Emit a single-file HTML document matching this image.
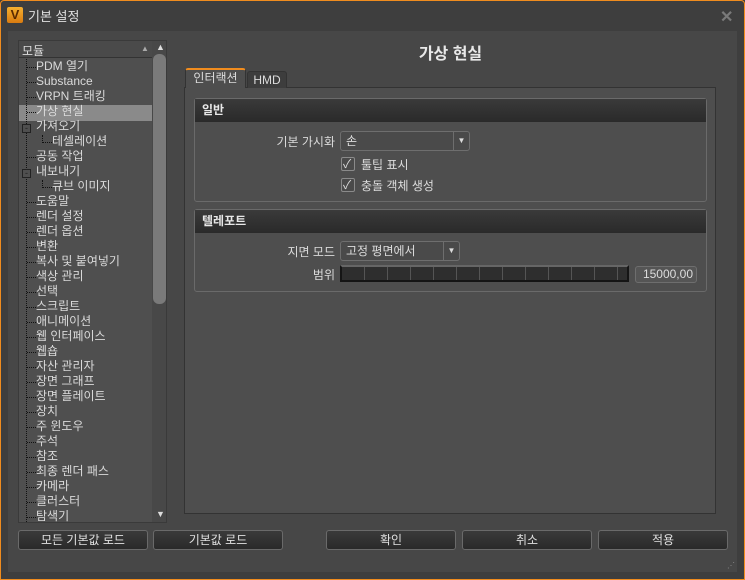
<!DOCTYPE html>
<html><head><meta charset="utf-8"><style>
*{margin:0;padding:0;box-sizing:border-box}
body{width:745px;height:580px;background:#3e3e3e;font-family:"Liberation Sans","Noto Sans CJK KR","NanumGothic",sans-serif;font-size:12px;color:#dcdcdc;position:relative;overflow:hidden}
.a{position:absolute}
#win{left:0;top:0;width:745px;height:580px;border:1px solid #f08c1e;border-radius:4px 4px 0 0}
#body{left:8px;top:31px;width:729px;height:541px;background:#474747}
#tree{left:18px;top:40px;width:149px;height:483px;background:#4f4f4f;border:1px solid #3a3a3a;overflow:hidden}
.it{position:absolute;left:18px;height:15px;line-height:15px;font-size:12px;white-space:nowrap;color:#dadada}
.d{position:absolute;border-top:1px dotted #111;width:9px;left:8px}
.btn{position:absolute;top:530px;height:20px;border:1px solid #6a6a6a;border-radius:3px;background:linear-gradient(#3a3a3a,#2a2a2a);color:#e0e0e0;text-align:center;line-height:18px;font-size:12px}
.grp{position:absolute;left:194px;width:513px;border:1px solid #6a6a6a;border-radius:3px}
.gh{height:23px;background:linear-gradient(#3a3a3a,#2a2a2a);font-weight:bold;padding-left:7px;line-height:22px;color:#e8e8e8}
.lbl{position:absolute;text-align:right;color:#dadada}
.cb{position:absolute;width:14px;height:14px;border:1px solid #8a8a8a;border-radius:2px;background:#4a4a4a}
</style></head><body>
<div class="a" id="win"></div>
<div class="a" style="left:7px;top:7px;width:16px;height:16px;background:linear-gradient(#f5b030,#d97b10);border-radius:2px;color:#5a2a00;font-weight:bold;font-size:13px;line-height:15px;text-align:center">V</div>
<div class="a" style="left:28px;top:6px;font-size:13px;color:#e0e0e0">기본 설정</div>
<div class="a" style="left:720px;top:7px;font-size:16px;color:#7a7a7a;font-weight:bold">✕</div>
<div class="a" id="body"></div>
<div class="a" id="tree">
 <div class="a" style="left:0;top:0;width:133px;height:17px;border-bottom:1px solid #333;background:#4a4a4a"></div>
 <div class="a" style="left:3px;top:1px;font-size:12px">모듈</div>
 <div class="a" style="left:122px;top:3px;font-size:8px;color:#aaa">▲</div>
 <div class="a" style="left:133px;top:0;width:14px;height:481px;background:#484848"></div>
 <div class="a" style="left:137px;top:1px;font-size:9px;color:#ddd">▲</div>
 <div class="a" style="left:134px;top:13px;width:13px;height:250px;background:#7a7a7a;border-radius:6px"></div>
 <div class="a" style="left:137px;top:468px;font-size:9px;color:#ddd">▼</div>
 <div class="a" style="left:0;top:64px;width:133px;height:16px;background:#8a8a8a"></div>
 <div class="a" style="left:7px;top:18px;height:465px;border-left:1px dotted #111"></div>
 <div class="a" style="left:23px;top:94px;height:8px;border-left:1px dotted #111"></div>
 <div class="a" style="left:23px;top:139px;height:8px;border-left:1px dotted #111"></div>
 <div class="d" style="top:26px"></div><div class="d" style="top:41px"></div><div class="d" style="top:56px"></div><div class="d" style="top:71px"></div>
 <div class="d" style="top:101px;left:24px;width:9px"></div><div class="d" style="top:116px"></div>
 <div class="d" style="top:146px;left:24px;width:9px"></div>
 <div class="d" style="top:161px"></div><div class="d" style="top:176px"></div><div class="d" style="top:191px"></div><div class="d" style="top:206px"></div><div class="d" style="top:221px"></div><div class="d" style="top:236px"></div><div class="d" style="top:251px"></div><div class="d" style="top:266px"></div><div class="d" style="top:281px"></div><div class="d" style="top:296px"></div><div class="d" style="top:311px"></div><div class="d" style="top:326px"></div><div class="d" style="top:341px"></div><div class="d" style="top:356px"></div><div class="d" style="top:371px"></div><div class="d" style="top:386px"></div><div class="d" style="top:401px"></div><div class="d" style="top:416px"></div><div class="d" style="top:431px"></div><div class="d" style="top:446px"></div><div class="d" style="top:461px"></div><div class="d" style="top:476px"></div>
 <div class="a" style="left:3px;top:83px;width:9px;height:9px;border:1px solid #222;background:#4f4f4f;font-size:9px;line-height:6px;text-align:center;color:#222">-</div>
 <div class="a" style="left:3px;top:128px;width:9px;height:9px;border:1px solid #222;background:#4f4f4f;font-size:9px;line-height:6px;text-align:center;color:#222">-</div>
</div>
<div class="a" style="left:18px;top:40px;width:133px;height:483px">
 <div class="it" style="top:19px">PDM 열기</div>
 <div class="it" style="top:34px">Substance</div>
 <div class="it" style="top:49px">VRPN 트래킹</div>
 <div class="it" style="top:64px">가상 현실</div>
 <div class="it" style="top:79px">가져오기</div>
 <div class="it" style="top:94px;left:34px">테셀레이션</div>
 <div class="it" style="top:109px">공동 작업</div>
 <div class="it" style="top:124px">내보내기</div>
 <div class="it" style="top:139px;left:34px">큐브 이미지</div>
 <div class="it" style="top:154px">도움말</div>
 <div class="it" style="top:169px">렌더 설정</div>
 <div class="it" style="top:184px">렌더 옵션</div>
 <div class="it" style="top:199px">변환</div>
 <div class="it" style="top:214px">복사 및 붙여넣기</div>
 <div class="it" style="top:229px">색상 관리</div>
 <div class="it" style="top:244px">선택</div>
 <div class="it" style="top:259px">스크립트</div>
 <div class="it" style="top:274px">애니메이션</div>
 <div class="it" style="top:289px">웹 인터페이스</div>
 <div class="it" style="top:304px">웹숍</div>
 <div class="it" style="top:319px">자산 관리자</div>
 <div class="it" style="top:334px">장면 그래프</div>
 <div class="it" style="top:349px">장면 플레이트</div>
 <div class="it" style="top:364px">장치</div>
 <div class="it" style="top:379px">주 윈도우</div>
 <div class="it" style="top:394px">주석</div>
 <div class="it" style="top:409px">참조</div>
 <div class="it" style="top:424px">최종 렌더 패스</div>
 <div class="it" style="top:439px">카메라</div>
 <div class="it" style="top:454px">클러스터</div>
 <div class="it" style="top:469px">탐색기</div>
</div>

<div class="a" style="left:185px;top:40px;width:531px;text-align:center;font-size:16px;font-weight:bold;color:#e8e8e8">가상 현실</div>
<div class="a" style="left:184px;top:87px;width:532px;height:427px;background:#4e4e4e;border:1px solid #333"></div>
<div class="a" style="left:185px;top:68px;width:61px;height:20px;background:#4e4e4e;border:1px solid #333;border-bottom:none;border-top:2px solid #f08c1e;border-radius:3px 3px 0 0;line-height:17px;text-align:center;font-size:12px">인터랙션</div>
<div class="a" style="left:247px;top:71px;width:40px;height:17px;background:#3d3d3d;border:1px solid #333;border-bottom:none;border-radius:3px 3px 0 0;line-height:16px;text-align:center;font-size:12px">HMD</div>

<div class="grp" style="top:98px;height:104px"><div class="gh">일반</div></div>
<div class="lbl" style="left:240px;top:133px;width:95px">기본 가시화</div>
<div class="a" style="left:340px;top:131px;width:130px;height:20px;border:1px solid #6e6e6e;border-radius:3px;background:#4a4a4a;padding-left:5px;line-height:18px">손<div class="a" style="right:0;top:0;width:16px;height:18px;border-left:1px solid #6e6e6e;font-size:8px;text-align:center;line-height:18px">▼</div></div>
<div class="cb" style="left:341px;top:157px"></div><div class="a" style="left:343px;top:155px;font-size:12px">✓</div>
<div class="a" style="left:361px;top:156px">툴팁 표시</div>
<div class="cb" style="left:341px;top:178px"></div><div class="a" style="left:343px;top:176px;font-size:12px">✓</div>
<div class="a" style="left:361px;top:177px">충돌 객체 생성</div>

<div class="grp" style="top:209px;height:83px"><div class="gh">텔레포트</div></div>
<div class="lbl" style="left:240px;top:243px;width:95px">지면 모드</div>
<div class="a" style="left:340px;top:241px;width:120px;height:20px;border:1px solid #6e6e6e;border-radius:3px;background:#4a4a4a;padding-left:5px;line-height:18px">고정 평면에서<div class="a" style="right:0;top:0;width:16px;height:18px;border-left:1px solid #6e6e6e;font-size:8px;text-align:center;line-height:18px">▼</div></div>
<div class="lbl" style="left:240px;top:266px;width:95px">범위</div>
<div class="a" style="left:340px;top:265px;width:289px;height:17px;background:repeating-linear-gradient(90deg,#2e2e2e 0 22px,#555 22px 23px);border:2px solid #151515;border-top-color:#666"></div>
<div class="a" style="left:635px;top:266px;width:62px;height:17px;border:1px solid #6e6e6e;border-radius:3px;background:#555;text-align:right;padding-right:3px;line-height:15px">15000,00</div>

<div class="btn" style="left:18px;width:130px">모든 기본값 로드</div>
<div class="btn" style="left:153px;width:130px">기본값 로드</div>
<div class="btn" style="left:326px;width:130px">확인</div>
<div class="btn" style="left:462px;width:130px">취소</div>
<div class="btn" style="left:598px;width:130px">적용</div>
<div class="a" style="left:727px;top:561px;font-size:8px;color:#888">⋰</div>
</body></html>
